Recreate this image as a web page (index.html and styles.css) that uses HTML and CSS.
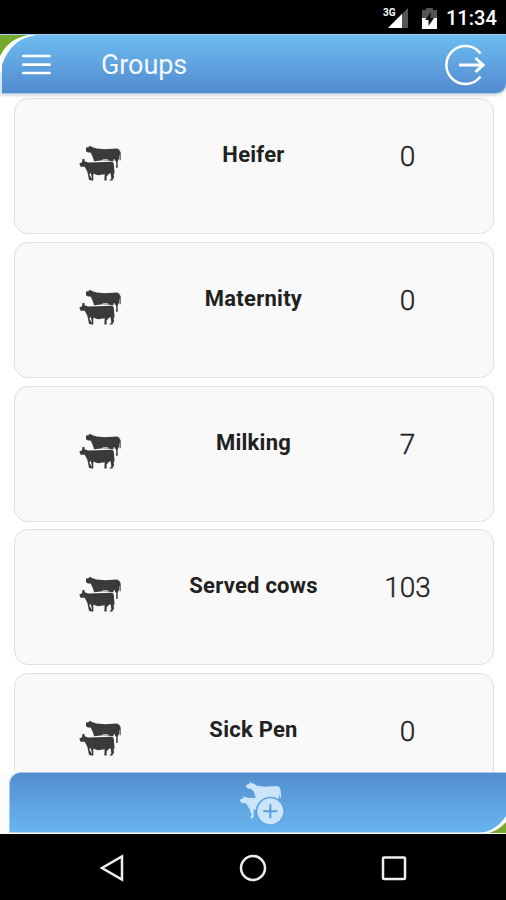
FILE: index.html
```html
<!DOCTYPE html>
<html lang="en">
<head>
<meta charset="utf-8">
<title>Groups</title>
<link rel="stylesheet" href="styles.css">
</head>
<body>
<svg width="0" height="0" class="defs">
  <symbol id="cows" viewBox="24 27 132 117">
    <path d="M48 39 L56 38 58 34 63 36 70 39 80 42 105 44 140 42 Q150 44 152 55 L152 77 149 77 148 60 147 62 147 73 143 82 143 100 138 100 139 84 132 72 130 80 94 78 72 80 69 69 62 54 54 54 48 50 Z"/>
    <path d="M28 87 L36 83 37 74 43 73 44 80 54 84 80 83 126 82 Q133 84 132 99 L134 116 131 118 132 129 127 138 118 138 124 132 122 117 118 117 110 125 110 138 103 138 104 119 84 122 70 118 70 138 62 138 66 132 62 115 58 120 66 134 64 138 57 136 52 112 44 97 32 97 Z"/>
    <path d="M92 78 Q105 71 120 78" class="gap"/>
  </symbol>
</svg>
<div class="screen">
  <div class="status">
    <svg class="signal" width="28" height="24" viewBox="0 0 28 24">
      <path d="M26 2V22H6Z" fill="#555"/><path d="M20 8V22H6Z" fill="#fff"/>
      <text x="1" y="10">3G</text>
    </svg>
    <svg width="15" height="21" viewBox="0 0 15 21">
      <path d="M4 0H11V2H15V11H0V2H4Z" fill="#555"/><path d="M0 10H15V21H0Z" fill="#fff"/>
      <path d="M9 4L3 12H6.500V18L12 10H8.500Z" fill="#111"/>
    </svg>
    <span class="time">11:34</span>
  </div>
  <header class="header">
    <svg class="corner-top" width="40" height="40" viewBox="0 0 40 40"><path d="M0 0H37Q11 3 2 30V37H0Z" fill="#fff"/><path d="M0 0H29Q9 3 0 21Z" fill="#75aa2c"/></svg>
    <svg width="30" height="22" viewBox="0 0 30 22" stroke="#fff" stroke-width="2.700" stroke-linecap="round"><path d="M2.200 2H28.500M2.200 10.700H28.500M2.200 19H28.500"/></svg>
    <h1>Groups</h1>
    <svg width="42" height="42" viewBox="0 0 42 42" fill="none" stroke="#fff" stroke-width="2.500"><path d="M36.500 9.500A19 19 0 1 0 36.500 32.500"/><path d="M15 21H39" stroke-width="3"/><path d="M31.500 14L39 21L31.500 28" stroke-width="3"/></svg>
  </header>
  <main class="list">
    <section class="card"><svg class="cow"><use href="#cows"/></svg><h2>Heifer</h2><span>0</span></section>
    <section class="card"><svg class="cow"><use href="#cows"/></svg><h2>Maternity</h2><span>0</span></section>
    <section class="card"><svg class="cow"><use href="#cows"/></svg><h2>Milking</h2><span>7</span></section>
    <section class="card"><svg class="cow"><use href="#cows"/></svg><h2>Served cows</h2><span>103</span></section>
    <section class="card"><svg class="cow"><use href="#cows"/></svg><h2>Sick Pen</h2><span>0</span></section>
  </main>
  <footer class="footer">
    <div class="add">
      <svg width="46" height="44" viewBox="57 36 138 132">
        <g fill="#cbe5fb"><path d="M78 48L88 44 91 38 95 43 103 44 110 50 135 53 170 51Q181 53 182 66L184 84 180 87 177 76 174 98 112 92 106 82 101 67 92 60 80 57Z"/><path d="M59 92L70 88 71 80 75 84 88 87 124 85 132 92 112 113 108 124 101 120 101 145 91 150 91 144 95 139 90 122 78 103 64 102Z"/></g>
        <circle cx="151" cy="127" r="44" fill="#5ea3e0"/><circle cx="151" cy="127" r="39" fill="#cbe5fb"/>
        <path d="M151 106V148M130 127H172" stroke="#5b9cdb" stroke-width="6"/>
      </svg>
      <svg class="corner-bottom" width="40" height="30" viewBox="0 0 40 30"><path d="M14 30Q30 28 40 13V30Z" fill="#fff"/><path d="M23 30Q33 27 40 19V30Z" fill="#75aa2c"/></svg>
    </div>
  </footer>
  <nav class="nav">
    <svg width="26" height="28" viewBox="0 0 26 28"><path d="M23 2.500V25.500L3 14Z"/></svg>
    <svg width="28" height="28" viewBox="0 0 28 28"><circle cx="14" cy="14" r="12"/></svg>
    <svg width="26" height="28" viewBox="0 0 26 28"><rect x="2" y="3.500" width="22" height="21.500" rx="1"/></svg>
  </nav>
</div>
</body>
</html>
```
FILE: styles.css
```css
* { box-sizing: border-box; }
body { margin: 0; background: #fff; font-family: Roboto, sans-serif; }
.defs { display: block; }
.screen { width: 506px; height: 900px; display: flex; flex-direction: column; overflow: hidden; }
.status { flex: none; height: 34px; background: #000; display: flex; align-items: center; justify-content: flex-end; padding-right: 10px; padding-top: 2px; }
.signal { margin-right: 12px; }
.signal text { font: 700 10px Roboto, sans-serif; fill: #fff; }
.time { width: 50px; margin-left: 9px; color: #fff; font-size: 20px; font-weight: 500; line-height: 32px; }
.header { flex: none; height: 60px; position: relative; border: 1px solid #a5cdec; border-left: 2px solid #d5e9f8; border-right: 0; border-radius: 0 0 10px 0; background: linear-gradient(#6dbcf2, #528ace); box-shadow: 0 2px 3px #ddd; display: flex; align-items: center; padding: 2px 20px 0 19px; }
.corner-top { position: absolute; left: -2px; top: 0; }
.header h1 { margin: 0 auto 0 50px; color: #f4faff; font-size: 27px; font-weight: 400; line-height: 32px; letter-spacing: -0.1px; }
.list { flex: 1; min-height: 0; overflow: hidden; padding: 4px 12.500px 0 13.500px; display: flex; flex-direction: column; gap: 7.800px; }
.card { flex: none; height: 136px; border: 1.500px solid #dedede; border-radius: 14px; background: #f9f9f9; display: grid; grid-template-columns: 170px 138px 1fr; justify-items: center; align-items: start; padding-top: 38px; color: #212121; }
.cow { width: 44px; height: 40px; margin-top: 6px; fill: #3a3a3a; }
.gap { fill: #f9f9f9; }
.card h2 { margin: 0; font-size: 22px; font-weight: 700; line-height: 36px; letter-spacing: 0.25px; white-space: nowrap; }
.card span { justify-self: start; width: 100px; margin-left: 35px; font-size: 28px; font-weight: 300; line-height: 39px; text-align: center; -webkit-text-stroke: 0.4px #212121; }
.footer { flex: none; height: 62px; background: #fbfbfb; }
.add { height: 61px; margin-left: 9px; position: relative; border: 1px solid #a6caeb; border-right: 0; border-bottom-color: #b5d6ea; border-radius: 12px 0 0 0; background: linear-gradient(#538dcf, #68b5ee); display: flex; justify-content: center; padding: 8px 0 0 8px; }
.corner-bottom { position: absolute; right: 0; bottom: -1px; }
.nav { flex: none; height: 66px; background: #000; display: flex; align-items: center; justify-content: space-between; padding: 2px 99px 0 99px; fill: none; stroke: #eee; stroke-width: 2.500; }
```
